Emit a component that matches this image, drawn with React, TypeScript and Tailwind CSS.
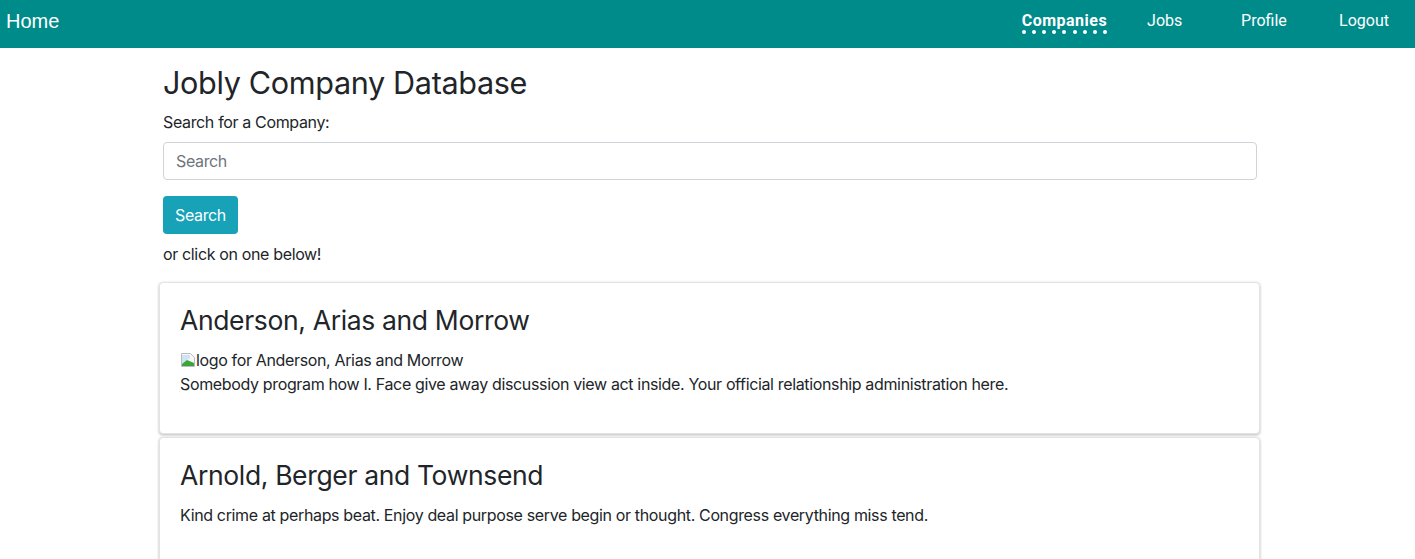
import React from "react";

const body = { fontFamily: "Inter, 'Noto Sans', sans-serif" };

function BrokenImg() {
  return (
    <svg width="16" height="16" viewBox="0 0 16 16" className="inline-block shrink-0">
      <path d="M1.5 1.5h9l4 4v9h-13z" fill="#f4f6f8" stroke="#b8bcc0" />
      <path d="M2 3 H10 V6 L6 9 L2 12z" fill="#cfe3f2" />
      <path d="M2 14 L2 12 L7 8 L14 11 V14z" fill="#3aa63a" />
    </svg>
  );
}

function Card({ title, desc, logo }: { title: string; desc: string; logo?: boolean }) {
  return (
    <div className="w-[1101px] bg-white rounded-[4px] border border-[#e3e3e3] shadow-[0_1px_3px_rgba(0,0,0,0.28)] px-[20px] pt-[21px] pb-[37px] mb-[3px]">
      <h3 className="text-[26.5px] leading-[32px] text-[#212529] font-normal mb-[12px]">{title}</h3>
      {logo && (
        <div className="text-[16px] leading-[24px] text-[#212529] flex items-center">
          <BrokenImg />
          <span>logo for {title}</span>
        </div>
      )}
      <p className="text-[16px] leading-[24px] text-[#212529]">{desc}</p>
    </div>
  );
}

export default function App() {
  return (
    <div className="min-h-[559px] bg-white" style={body}>
      <nav className="h-[48px] bg-[#008b8b] flex items-center justify-between text-white">
        <span className="pl-[6px] text-[20px] leading-[24px] mt-[-6px]" style={{ fontFamily: "'Liberation Sans', Arial, sans-serif" }}>
          Home
        </span>
        <div className="flex items-center mt-[-6px] text-[16px] leading-[20px]" style={{ fontFamily: "Roboto, sans-serif" }}>
          <span className="relative font-bold tracking-[0.03em] mr-[40px]">
            Companies
            <span className="absolute left-[0px] right-[0px] top-[19px] flex justify-between">
              {Array.from({ length: 9 }).map((_, i) => (
                <span key={i} className="w-[4px] h-[4px] rounded-full bg-white" />
              ))}
            </span>
          </span>
          <span className="w-[94px]">Jobs</span>
          <span className="w-[98px]">Profile</span>
          <span className="mr-[26px]">Logout</span>
        </div>
      </nav>
      <div className="w-[1105px] mx-auto pl-[4px] pt-[16px] tracking-[-0.022em]">
        <div className="px-[4px]">
          <h1 className="text-[30.6px] leading-[38px] text-[#212529] font-normal mb-[10px]">Jobly Company Database</h1>
          <label className="block text-[16px] leading-[20px] text-[#212529] mb-[10px]">Search for a Company:</label>
          <div className="w-[1094px] h-[38px] border border-[#ced4da] rounded-[4px] flex items-center px-[12px] text-[16px] text-[#6c757d] mb-[16px]">
            Search
          </div>
          <button className="h-[38px] px-[12px] rounded-[4px] bg-[#17a2b8] text-white text-[16px] leading-[24px] mb-[8px]">
            Search
          </button>
          <p className="text-[16px] leading-[24px] text-[#212529] mb-[16px]">or click on one below!</p>
        </div>
        <Card
          title="Anderson, Arias and Morrow"
          logo
          desc="Somebody program how I. Face give away discussion view act inside. Your official relationship administration here."
        />
        <Card
          title="Arnold, Berger and Townsend"
          desc="Kind crime at perhaps beat. Enjoy deal purpose serve begin or thought. Congress everything miss tend."
        />
      </div>
    </div>
  );
}
